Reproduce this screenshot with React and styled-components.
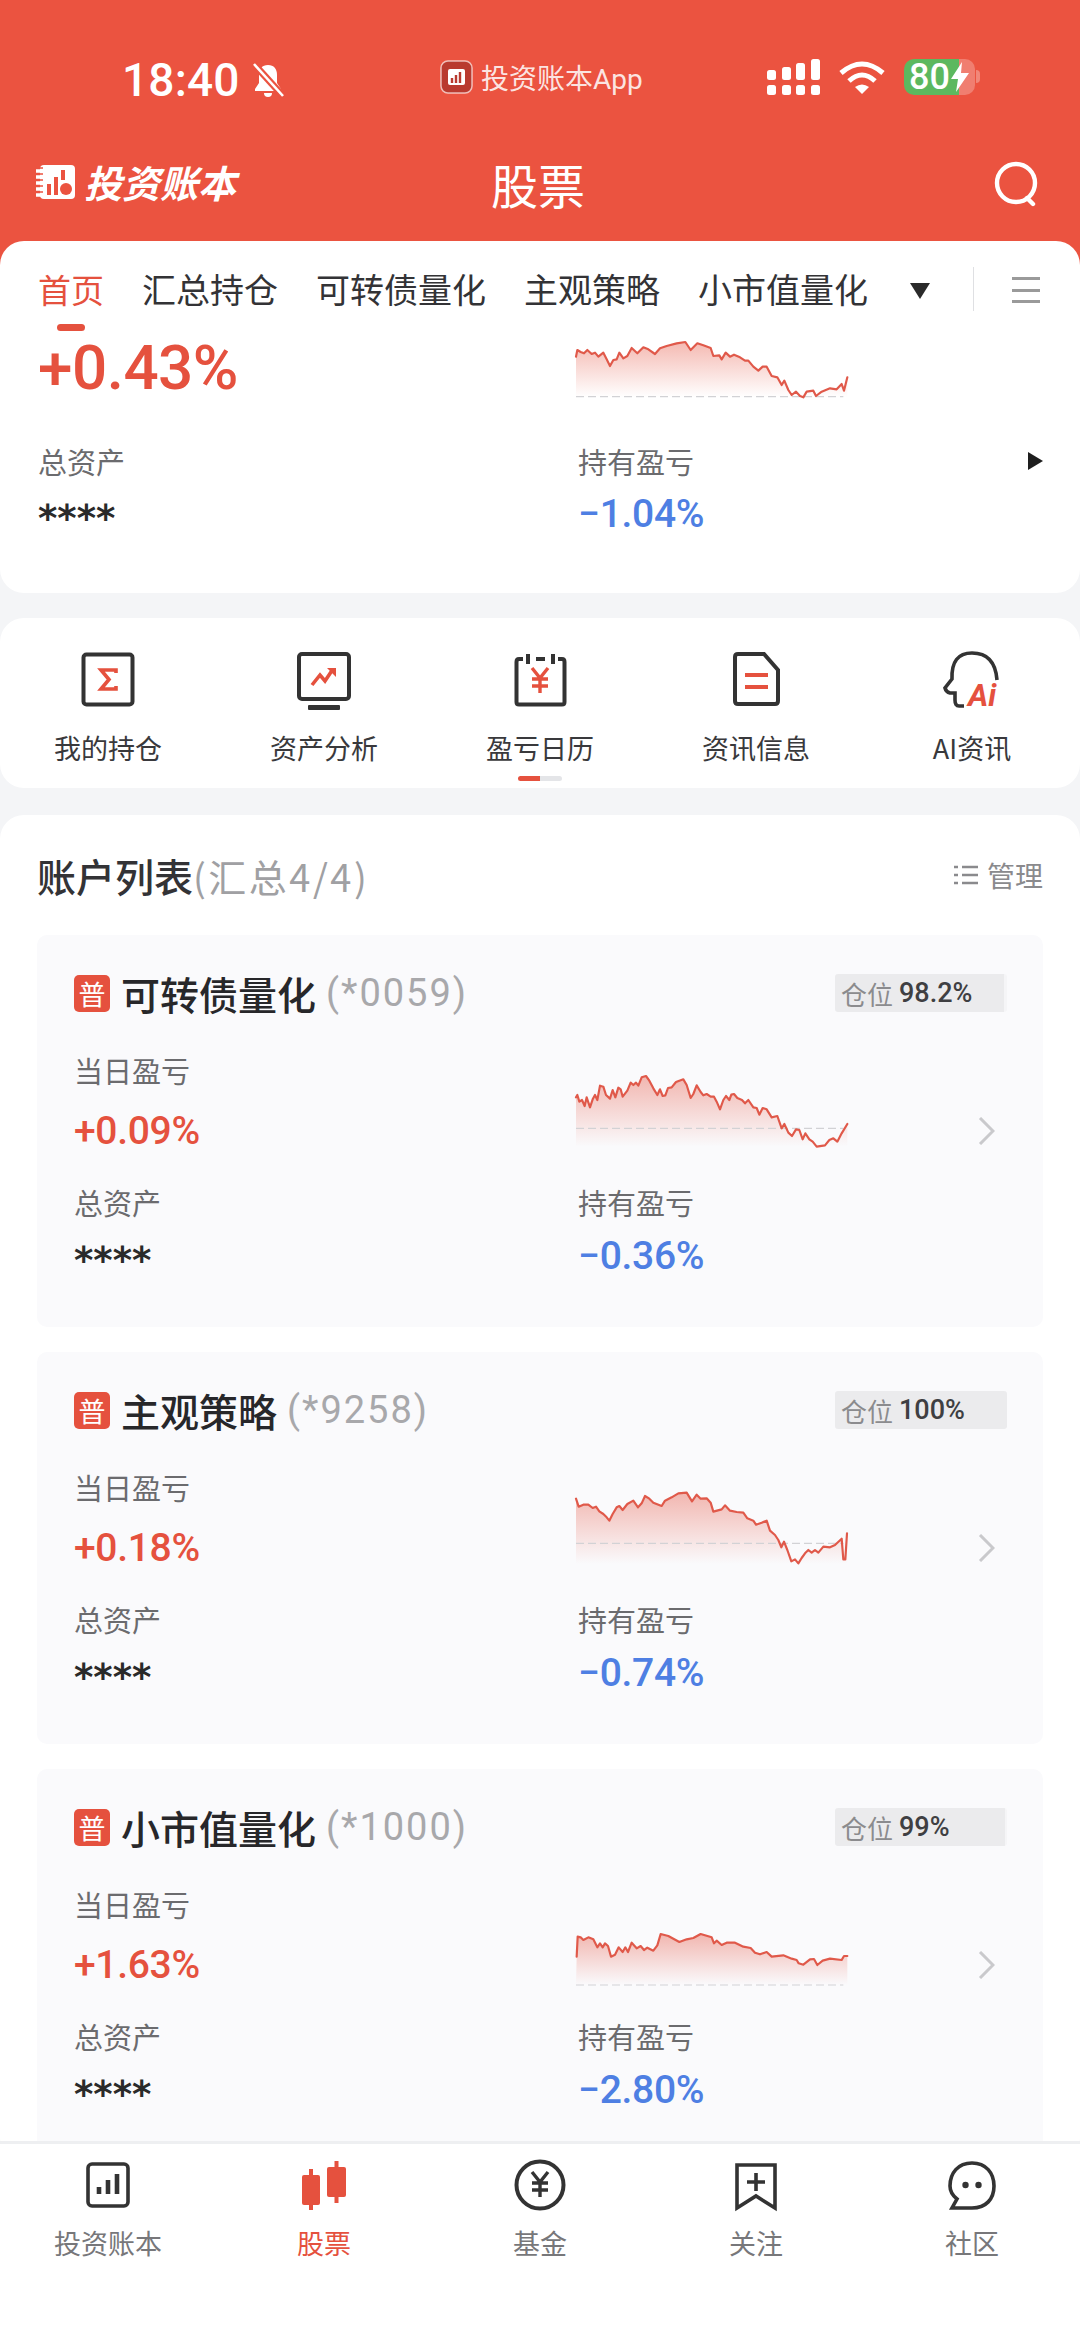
import React from 'react';
import styled, { createGlobalStyle } from 'styled-components';

const RED = '#EB5340';
const TEXT_RED = '#E5513E';
const BLUE = '#4E7FE3';
const INK = '#333336';

const Global = createGlobalStyle`
  * { box-sizing: border-box; }
  html, body { margin: 0; padding: 0; background: #fff; }
  body { font-family: Roboto, "Noto Sans CJK SC", sans-serif; }
`;

const Page = styled.div`
  width: 1080px;
  height: 2346px;
  display: flex;
  flex-direction: column;
  overflow: hidden;
  background: #f4f5f7;
`;
const Header = styled.header`
  background: ${RED};
  color: #fff;
  height: 241px;
  flex: none;
`;
const StatusBar = styled.div`
  display: grid;
  grid-template-columns: 440px 327px 1fr;
  height: 148px;
  padding-top: 58px;
  align-items: start;
`;
const Clock = styled.div`
  display: flex;
  align-items: center;
  gap: 10px;
  padding-left: 122px;
  height: 44px;
  font-size: 46px;
  font-weight: 500;
  line-height: 44px;
  letter-spacing: 0.2px;
`;
const AppTag = styled.div`
  display: flex;
  align-items: center;
  gap: 8px;
  height: 38px;
  font-size: 28px;
  color: rgba(255, 255, 255, 0.86);
`;
const StatusIcons = styled.div`
  display: flex;
  align-items: center;
  height: 38px;
  gap: 18px;
`;
const Battery = styled.div`
  width: 71px;
  height: 36px;
  border-radius: 10px;
  display: flex;
  align-items: center;
  padding-left: 5px;
  gap: 1px;
  font-size: 36px;
  font-weight: 500;
  position: relative;
  background: linear-gradient(to right, #5cb85f 78%, rgba(255, 255, 255, 0.25) 78%);
  &::after {
    content: '';
    position: absolute;
    right: -5px;
    top: 11px;
    width: 4px;
    height: 13px;
    border-radius: 0 4px 4px 0;
    background: rgba(255, 255, 255, 0.3);
  }
`;
const TitleBar = styled.div`
  display: grid;
  grid-template-columns: 1fr auto 1fr;
  align-items: center;
  height: 72px;
  padding: 0 40px 0 36px;
`;
const Brand = styled.div`
  display: flex;
  align-items: center;
  gap: 8px;
  margin-top: -5px;
`;
const BrandText = styled.span`
  font-family: "Noto Sans CJK SC", sans-serif;
  font-size: 38px;
  font-weight: 700;
  line-height: 44px;
  font-style: italic;
`;
const PageTitle = styled.h1`
  margin: 0;
  font-family: "Noto Sans CJK SC", sans-serif;
  font-size: 47px;
  font-weight: 400;
  line-height: 60px;
`;
const SearchBox = styled.div`
  display: flex;
  justify-content: flex-end;
`;
const TabsWrap = styled.div`
  background: ${RED};
  flex: none;
`;
const Tabs = styled.nav`
  background: #fff;
  border-radius: 24px 24px 0 0;
  height: 89px;
  padding: 25px 40px 0 38px;
  display: flex;
  align-items: flex-start;
  gap: 38px;
`;
const Tab = styled.span`
  position: relative;
  font-family: "Noto Sans CJK SC", sans-serif;
  font-size: ${(p) => (p.$active ? 33 : 34)}px;
  line-height: 46px;
  white-space: nowrap;
  color: ${(p) => (p.$active ? TEXT_RED : INK)};
  ${(p) =>
    p.$active &&
    `&::after {
      content: '';
      position: absolute;
      left: 19px;
      top: 58px;
      width: 28px;
      height: 7px;
      border-radius: 4px;
      background: ${TEXT_RED};
    }`}
`;
const TabCaret = styled.span`
  width: 0;
  height: 0;
  margin: 17px 0 0 4px;
  border-left: 10px solid transparent;
  border-right: 10px solid transparent;
  border-top: 16px solid #2a2a2a;
`;
const TabDivider = styled.span`
  width: 1px;
  height: 44px;
  margin: 1px 0 0 auto;
  background: #dfe0e3;
`;
const TabMenu = styled.span`
  width: 28px;
  height: 26px;
  margin-top: 11px;
  display: flex;
  flex-direction: column;
  justify-content: space-between;
  span {
    display: block;
    height: 3px;
    background: #9a9a9a;
  }
`;
const Main = styled.main`
  flex: 1;
  min-height: 0;
  overflow: hidden;
`;
const Hero = styled.section`
  background: #fff;
  height: 263px;
  border-radius: 0 0 24px 24px;
  padding: 8px 37px 0 38px;
  display: grid;
  grid-template-columns: 540px 1fr;
  grid-template-rows: 60px auto;
  row-gap: 43px;
`;
const HeroValue = styled.div`
  font-size: 62px;
  line-height: 60px;
  font-weight: 500;
  color: ${TEXT_RED};
  letter-spacing: -0.5px;
`;
const LabelRow = styled.div`
  display: flex;
  justify-content: space-between;
  align-items: center;
`;
const Triangle = styled.span`
  width: 0;
  height: 0;
  border-top: 9px solid transparent;
  border-bottom: 9px solid transparent;
  border-left: 15px solid #1e1e1e;
`;
const Label = styled.div`
  font-family: "Noto Sans CJK SC", sans-serif;
  font-size: 29px;
  line-height: 40px;
  color: #6b6b6e;
`;
const Value = styled.div`
  margin-top: ${(p) => p.$gap}px;
  font-size: 39px;
  font-weight: 500;
  line-height: 50px;
  color: ${(p) => p.$color};
  letter-spacing: -0.3px;
`;
const Masked = styled.div`
  margin-top: ${(p) => p.$gap}px;
  font-family: "DejaVu Sans", sans-serif;
  font-size: 37px;
  line-height: 60px;
  height: 60px;
  margin-bottom: -10px;
  color: #2a2a2a;
  font-weight: 700;
`;
const Quick = styled.section`
  margin-top: 25px;
  height: 170px;
  background: #fff;
  border-radius: 24px;
  padding-top: 32px;
  display: flex;
  flex-direction: column;
  align-items: center;
`;
const QuickGrid = styled.div`
  width: 100%;
  display: grid;
  grid-template-columns: repeat(5, 216px);
`;
const QuickItem = styled.div`
  display: flex;
  flex-direction: column;
  align-items: center;
  gap: 20px;
`;
const QuickLabel = styled.span`
  font-family: "Noto Sans CJK SC", sans-serif;
  font-size: 27px;
  line-height: 36px;
  color: #39393c;
`;
const PageDots = styled.div`
  width: 44px;
  height: 5px;
  margin-top: 10px;
  border-radius: 3px;
  background: linear-gradient(to right, ${TEXT_RED} 50%, #e4e5e8 50%);
`;
const Accounts = styled.section`
  margin-top: 27px;
  background: #fff;
  border-radius: 24px;
  padding: 35px 37px 0;
`;
const AccountsHead = styled.div`
  display: flex;
  align-items: center;
  justify-content: space-between;
  height: 50px;
`;
const AccountsTitle = styled.h2`
  margin: 0;
  font-family: "Noto Sans CJK SC", sans-serif;
  font-size: 39px;
  line-height: 50px;
  font-weight: 500;
  color: ${INK};
  span {
    font-weight: 400;
    font-size: 38px;
    letter-spacing: 2.5px;
    color: #a0a0a3;
  }
`;
const Manage = styled.div`
  display: flex;
  align-items: center;
  gap: 9px;
  font-family: "Noto Sans CJK SC", sans-serif;
  font-size: 28px;
  color: #8a8a8d;
`;
const AccountList = styled.div`
  margin-top: 35px;
  display: flex;
  flex-direction: column;
  gap: 25px;
`;
const Card = styled.article`
  height: 392px;
  flex: none;
  border-radius: 10px;
  background: #fafafc;
  padding: 39px 0 0 37px;
`;
const CardHead = styled.div`
  display: flex;
  align-items: center;
  height: 38px;
  padding-right: 36px;
`;
const Badge = styled.span`
  width: 36px;
  height: 37px;
  border-radius: 5px;
  background: ${TEXT_RED};
  color: #fff;
  font-family: "Noto Sans CJK SC", sans-serif;
  font-size: 27px;
  line-height: 37px;
  text-align: center;
`;
const CardName = styled.span`
  margin-left: 11px;
  font-family: "Noto Sans CJK SC", sans-serif;
  font-size: 39px;
  font-weight: 500;
  line-height: 50px;
  color: #27272a;
`;
const CardCode = styled.span`
  margin-left: 10px;
  font-size: 38px;
  letter-spacing: 2px;
  line-height: 50px;
  color: #a8a8ab;
`;
const Position = styled.div`
  margin-left: auto;
  width: 172px;
  height: 38px;
  padding-left: 6px;
  border-radius: 3px;
  display: flex;
  align-items: center;
  gap: 6px;
  font-size: 27px;
  font-weight: 500;
  color: #3f3f42;
  background: linear-gradient(to right, #ebebed ${(p) => p.$fill}%, #f5f5f7 ${(p) => p.$fill}%);
  em {
    font-style: normal;
    font-weight: 400;
    font-size: 26px;
    font-family: "Noto Sans CJK SC", sans-serif;
    color: #8b8b8e;
  }
`;
const CardBody = styled.div`
  margin-top: 38px;
  padding-right: 48px;
  display: grid;
  grid-template-columns: 504px 1fr;
  grid-template-rows: 106px auto;
  row-gap: 26px;
`;
const ChartCell = styled.div`
  display: flex;
  margin-left: -2px;
  justify-content: space-between;
`;
const ChartSvg = styled.svg`
  display: block;
  width: 272px;
  height: ${(p) => p.$h}px;
  overflow: visible;
`;
const HeroChartCell = styled.div`
  margin-left: -2px;
`;
const Chevron = styled.svg`
  align-self: flex-end;
  margin-bottom: 11px;
  width: 17px;
  height: 28px;
`;
const BottomNav = styled.nav`
  flex: none;
  height: 205px;
  background: #fff;
  border-top: 3px solid #eeeff1;
  padding-top: 14px;
  display: grid;
  grid-template-columns: repeat(5, 216px);
  align-items: start;
`;
const NavItem = styled.div`
  display: flex;
  flex-direction: column;
  align-items: center;
  gap: 13px;
`;
const NavLabel = styled.span`
  font-family: "Noto Sans CJK SC", sans-serif;
  font-size: 27px;
  line-height: 36px;
  color: ${(p) => (p.$active ? TEXT_RED : '#77777a')};
`;
const IconSvg = styled.svg`
  display: block;
  overflow: visible;
`;

const toPts = (s) => s.trim().split(/\s+/).map((p) => p.split(',').map(Number));

const HERO = toPts(`108,110 112,90 122,96 132,100 142,90 155,102 165,98 175,110 190,98 200,118 210,138 220,120 230,118 238,98 250,115 262,108 275,84 292,100 310,82 325,88 345,102 360,85 380,78 410,70 436,66 452,90 472,70 490,76 512,84 520,108 538,106 545,118 557,98 570,110 582,104 600,112 615,122 625,122 640,140 655,152 668,140 680,140 695,168 712,172 725,195 733,182 745,210 755,225 768,215 780,228 790,232 800,215 820,212 828,228 845,215 870,205 890,208 905,192 912,212 922,172`);
const C1 = toPts(`108,232 112,225 118,245 126,240 134,258 140,232 150,262 158,238 165,225 172,240 180,197 190,200 198,225 210,236 218,210 226,232 235,203 242,208 248,230 262,212 272,188 280,195 288,188 295,197 305,172 318,168 328,182 340,205 352,225 360,208 368,228 376,226 384,204 395,202 408,186 418,182 430,178 440,195 452,234 460,222 470,196 482,216 490,226 500,222 512,230 522,230 530,245 540,268 550,240 558,228 568,240 574,224 582,222 592,234 606,240 615,250 625,240 640,262 650,264 658,284 668,264 680,268 695,292 712,288 725,325 733,312 745,338 756,348 768,328 778,330 788,358 796,340 808,358 818,365 830,380 855,376 868,360 880,355 892,365 905,340 922,312`);
const C2 = toPts(`108,176 116,200 130,194 145,194 158,204 168,200 178,214 190,222 200,232 208,242 218,222 230,202 238,198 248,210 262,192 280,182 294,202 305,190 315,168 328,176 340,188 365,198 375,182 395,172 415,160 440,158 456,184 470,164 482,176 500,175 512,188 520,215 545,208 555,196 570,212 590,216 610,218 622,235 640,242 648,254 665,248 680,242 690,272 705,285 715,300 724,322 732,305 742,330 754,364 765,358 775,370 785,354 795,340 805,330 815,338 825,330 835,338 850,320 870,322 885,315 905,296 910,358 916,358 921,280`);
const C3 = toPts(`110,290 113,230 122,232 130,240 145,232 160,238 172,262 180,250 188,262 195,250 204,258 213,290 225,284 236,262 248,276 256,262 264,276 275,248 290,265 302,258 312,270 322,263 340,272 352,256 362,222 385,228 418,246 440,238 460,234 482,222 515,232 522,250 530,242 545,255 560,248 585,248 610,260 632,264 645,278 660,283 680,276 695,290 730,286 755,296 770,300 776,310 790,314 810,298 822,297 832,315 848,302 870,296 905,300 912,288 922,288`);

function Chart({ id, pts, vy, vh, h, dash, floor }) {
  const line = pts.map((p) => p.join(',')).join(' ');
  const top = Math.min(...pts.map((p) => p[1]));
  const area = `108,${floor} ${line} 922,${floor}`;
  return (
    <ChartSvg $h={h} viewBox={`108 ${vy} 816 ${vh}`} preserveAspectRatio="none">
      <defs>
        <linearGradient id={id} gradientUnits="userSpaceOnUse" x1="0" y1={top} x2="0" y2={floor}>
          <stop offset="0" stopColor="#E5513E" stopOpacity="0.4" />
          <stop offset="1" stopColor="#E5513E" stopOpacity="0" />
        </linearGradient>
      </defs>
      <polygon points={area} fill={`url(#${id})`} />
      <line x1="108" x2="910" y1={dash} y2={dash} stroke="#d2d2d5" strokeWidth="3.5" strokeDasharray="24 12" />
      <polyline points={line} fill="none" stroke="#E0594A" strokeWidth="6.5" strokeLinejoin="round" strokeLinecap="round" />
    </ChartSvg>
  );
}

const Icon = ({ size = 60, h, children }) => (
  <IconSvg width={size} height={h || size} viewBox={`0 0 ${size} ${h || size}`} fill="none">
    {children}
  </IconSvg>
);

const Yen = ({ x, y, s = 1, color }) => (
  <g transform={`translate(${x} ${y}) scale(${s})`} stroke={color} strokeWidth="3.4" fill="none">
    <path d="M-8 -12 L0 -2 L8 -12 M0 -2 V13 M-8 -1 H8 M-8 6 H8" />
  </g>
);

const BellOff = () => (
  <svg width="36" height="38" viewBox="0 0 36 38">
    <path d="M18 4c-6 0-9 4-9 10v8l-4 6v2h26v-2l-4-6v-8c0-6-3-10-9-10z" fill="#fff" />
    <path d="M14 32a4 4 0 0 0 8 0z" fill="#fff" />
    <path d="M4 3 L33 35" stroke={RED} strokeWidth="7" />
    <path d="M4 3 L33 35" stroke="#fff" strokeWidth="2.6" />
  </svg>
);
const AppGlyph = () => (
  <svg width="33" height="34" viewBox="0 0 33 34">
    <rect x="1" y="1" width="31" height="32" rx="7" fill="#B93A2F" stroke="rgba(255,255,255,.65)" strokeWidth="1.5" />
    <rect x="8" y="9" width="17" height="16" rx="2" fill="#fff" />
    <path d="M12 23v-5M16 23v-8M20 23v-11" stroke="#B93A2F" strokeWidth="2.4" />
  </svg>
);
const Signal = () => (
  <svg width="53" height="36" viewBox="0 0 53 36" fill="#fff">
    <rect x="0" y="11" width="9" height="10" rx="2.5" />
    <rect x="15" y="8" width="9" height="13" rx="2.5" />
    <rect x="29" y="4" width="9" height="17" rx="2.5" />
    <rect x="44" y="0" width="9" height="21" rx="2.5" />
    <rect x="0" y="26" width="9" height="10" rx="2.5" />
    <rect x="15" y="26" width="9" height="10" rx="2.5" />
    <rect x="29" y="26" width="9" height="10" rx="2.5" />
    <rect x="44" y="26" width="9" height="10" rx="2.5" />
  </svg>
);
const Wifi = () => (
  <svg width="48" height="34" viewBox="0 0 48 34" fill="none" stroke="#fff" strokeWidth="5">
    <path d="M3 13 Q24 -5 45 13" />
    <path d="M11 21 Q24 9 37 21" />
    <path d="M17 27 Q24 22 31 27 L24 34 Z" fill="#fff" stroke="none" />
  </svg>
);
const Bolt = () => (
  <svg width="18" height="30" viewBox="0 0 18 30" fill="#fff">
    <path d="M11 0 L0 17 H7 L5 30 L18 11 H10 Z" />
  </svg>
);
const Logo = () => (
  <svg width="40" height="36" viewBox="0 0 40 36">
    <rect x="4" y="1" width="35" height="34" rx="4" fill="#fff" />
    <path d="M0 7h8M0 13h8M0 19h8M0 25h8M0 31h8" stroke="#fff" strokeWidth="3.4" strokeLinecap="round" />
    <path d="M0 4h7M0 10h7M0 16h7M0 22h7M0 28h7" stroke={RED} strokeWidth="1.4" />
    <rect x="11" y="20" width="4" height="11" fill={RED} />
    <rect x="18" y="13" width="4" height="18" fill={RED} />
    <rect x="25" y="6" width="4" height="10" fill={RED} />
    <circle cx="30" cy="25" r="6" fill={RED} />
  </svg>
);
const Search = () => (
  <svg width="46" height="46" viewBox="0 0 46 46" fill="none" stroke="#fff" strokeWidth="4.4" strokeLinecap="round">
    <circle cx="22" cy="22" r="19" />
    <path d="M33 37 L39 43" />
  </svg>
);

const quickIcons = {
  sigma: (
    <Icon>
      <rect x="5.5" y="4.5" width="49" height="50" rx="3" stroke="#333" strokeWidth="4" />
      <path d="M38 23 V20 H23 L31 29.5 L23 39 H38 V36" stroke={TEXT_RED} strokeWidth="3.6" />
    </Icon>
  ),
  screen: (
    <Icon>
      <rect x="5" y="4" width="50" height="45" rx="3" stroke="#333" strokeWidth="4" />
      <rect x="14" y="55" width="32" height="5" rx="1" fill="#333" />
      <path d="M18 35 L26 25 L31 31 L39 19" stroke={TEXT_RED} strokeWidth="3.6" />
      <path d="M33 18 H42 V27 Z" fill={TEXT_RED} />
    </Icon>
  ),
  calendar: (
    <Icon>
      <path d="M13 9 H9 Q6.5 9 6.5 12 V52 Q6.5 54.5 9 54.5 H52 Q54.5 54.5 54.5 52 V12 Q54.5 9 52 9 H48" stroke="#333" strokeWidth="4" />
      <path d="M18 4 V14 M43 4 V14 M26 9 H35" stroke="#333" strokeWidth="4" />
      <Yen x={30} y={30} color={TEXT_RED} />
    </Icon>
  ),
  doc: (
    <Icon>
      <path d="M12 4 H38 L52 20 V51 Q52 54 49 54 H12 Q9 54 9 51 V7 Q9 4 12 4 Z" stroke="#333" strokeWidth="4" />
      <path d="M19 25 H42 M19 37 H42" stroke={TEXT_RED} strokeWidth="4" />
    </Icon>
  ),
  ai: (
    <Icon>
      <path d="M22 56 H17 Q13 56 13 50 V43 H8 Q4 42 3 38 L10 29 Q9 3 30 3 Q53 3 55 30" stroke="#333" strokeWidth="3.6" />
      <text x="26" y="56" fontFamily="Roboto, sans-serif" fontSize="31" fontWeight="700" fontStyle="italic" fill={TEXT_RED}>Ai</text>
    </Icon>
  ),
};

const navIcons = {
  book: (
    <Icon h={54}>
      <rect x="10" y="6" width="40" height="42" rx="4" stroke="#333" strokeWidth="3.6" />
      <path d="M21 36 V29 M30 36 V22 M39 36 V16" stroke="#333" strokeWidth="4.6" />
    </Icon>
  ),
  stock: (
    <Icon h={54}>
      <path d="M17 11 V52 M42.5 3 V45" stroke={TEXT_RED} strokeWidth="4" />
      <rect x="8" y="17" width="18" height="30" rx="2" fill={TEXT_RED} />
      <rect x="33" y="9" width="19" height="30" rx="2" fill={TEXT_RED} />
    </Icon>
  ),
  fund: (
    <Icon h={54}>
      <circle cx="30" cy="27" r="23.5" stroke="#333" strokeWidth="4" />
      <Yen x={30} y={26} color="#333" />
    </Icon>
  ),
  follow: (
    <Icon h={54}>
      <path d="M11 7 H49 V50 L30 38 L11 50 Z" stroke="#333" strokeWidth="3.6" />
      <path d="M30 15 V33 M21 24 H39" stroke="#333" strokeWidth="3.6" />
    </Icon>
  ),
  chat: (
    <Icon h={54}>
      <path d="M30 5 C44 5 52 15 52 28 C52 41 44 50 30 50 H10 L15 41 C10 37 8 33 8 28 C8 15 16 5 30 5 Z" stroke="#333" strokeWidth="3.6" />
      <circle cx="23.5" cy="27" r="3.2" fill="#333" />
      <circle cx="36.5" cy="27" r="3.2" fill="#333" />
    </Icon>
  ),
};

const TABS = ['汇总持仓', '可转债量化', '主观策略', '小市值量化'];
const QUICK = [
  ['sigma', '我的持仓'],
  ['screen', '资产分析'],
  ['calendar', '盈亏日历'],
  ['doc', '资讯信息'],
  ['ai', 'AI资讯'],
];
const NAV = [
  ['book', '投资账本'],
  ['stock', '股票', true],
  ['fund', '基金'],
  ['follow', '关注'],
  ['chat', '社区'],
];
const ACCOUNTS = [
  { name: '可转债量化', code: '(*0059)', pos: '98.2%', fill: 98.2, day: '+0.09%', hold: '−0.36%', pts: C1, vy: 90, dash: 325, floor: 380 },
  { name: '主观策略', code: '(*9258)', pos: '100%', fill: 100, day: '+0.18%', hold: '−0.74%', pts: C2, vy: 81, dash: 310, floor: 372 },
  { name: '小市值量化', code: '(*1000)', pos: '99%', fill: 99, day: '+1.63%', hold: '−2.80%', pts: C3, vy: 72, dash: 375, floor: 375 },
];

export default function App() {
  return (
    <Page>
      <Global />
      <Header>
        <StatusBar>
          <Clock>18:40<BellOff /></Clock>
          <AppTag><AppGlyph />投资账本App</AppTag>
          <StatusIcons>
            <Signal />
            <Wifi />
            <Battery>80<Bolt /></Battery>
          </StatusIcons>
        </StatusBar>
        <TitleBar>
          <Brand><Logo /><BrandText>投资账本</BrandText></Brand>
          <PageTitle>股票</PageTitle>
          <SearchBox><Search /></SearchBox>
        </TitleBar>
      </Header>
      <TabsWrap>
        <Tabs>
          <Tab $active>首页</Tab>
          {TABS.map((t) => <Tab key={t}>{t}</Tab>)}
          <TabCaret />
          <TabDivider />
          <TabMenu><span /><span /><span /></TabMenu>
        </Tabs>
      </TabsWrap>
      <Main>
        <Hero>
          <HeroValue>+0.43%</HeroValue>
          <HeroChartCell>
            <Chart id="hero" pts={HERO} vy={54} vh={180} h={60} dash={230} floor={232} />
          </HeroChartCell>
          <div>
            <Label>总资产</Label>
            <Masked $gap={8}>****</Masked>
          </div>
          <div>
            <LabelRow><Label>持有盈亏</Label><Triangle /></LabelRow>
            <Value $gap={8} $color={BLUE}>−1.04%</Value>
          </div>
        </Hero>
        <Quick>
          <QuickGrid>
            {QUICK.map(([k, l]) => (
              <QuickItem key={k}>
                {quickIcons[k]}
                <QuickLabel>{l}</QuickLabel>
              </QuickItem>
            ))}
          </QuickGrid>
          <PageDots />
        </Quick>
        <Accounts>
          <AccountsHead>
            <AccountsTitle>账户列表<span>(汇总4/4)</span></AccountsTitle>
            <Manage>
              <svg width="24" height="20" viewBox="0 0 24 20" stroke="#8a8a8d" strokeWidth="2.4">
                <path d="M8 2 H24 M8 10 H24 M8 18 H24 M0 2 H4 M0 10 H4 M0 18 H4" />
              </svg>
              管理
            </Manage>
          </AccountsHead>
          <AccountList>
            {ACCOUNTS.map((a) => (
              <Card key={a.code}>
                <CardHead>
                  <Badge>普</Badge>
                  <CardName>{a.name}</CardName>
                  <CardCode>{a.code}</CardCode>
                  <Position $fill={a.fill}><em>仓位</em>{a.pos}</Position>
                </CardHead>
                <CardBody>
                  <div>
                    <Label>当日盈亏</Label>
                    <Value $gap={16} $color={TEXT_RED}>{a.day}</Value>
                  </div>
                  <ChartCell>
                    <Chart id={a.code.slice(2, 6)} pts={a.pts} vy={a.vy} vh={318} h={106} dash={a.dash} floor={a.floor} />
                    <Chevron viewBox="0 0 17 28" fill="none" stroke="#c9c9cc" strokeWidth="3">
                      <path d="M2 1 L15 14 L2 27" />
                    </Chevron>
                  </ChartCell>
                  <div>
                    <Label>总资产</Label>
                    <Masked $gap={9}>****</Masked>
                  </div>
                  <div>
                    <Label>持有盈亏</Label>
                    <Value $gap={9} $color={BLUE}>{a.hold}</Value>
                  </div>
                </CardBody>
              </Card>
            ))}
          </AccountList>
        </Accounts>
      </Main>
      <BottomNav>
        {NAV.map(([k, l, active]) => (
          <NavItem key={k}>
            {navIcons[k]}
            <NavLabel $active={active}>{l}</NavLabel>
          </NavItem>
        ))}
      </BottomNav>
    </Page>
  );
}
